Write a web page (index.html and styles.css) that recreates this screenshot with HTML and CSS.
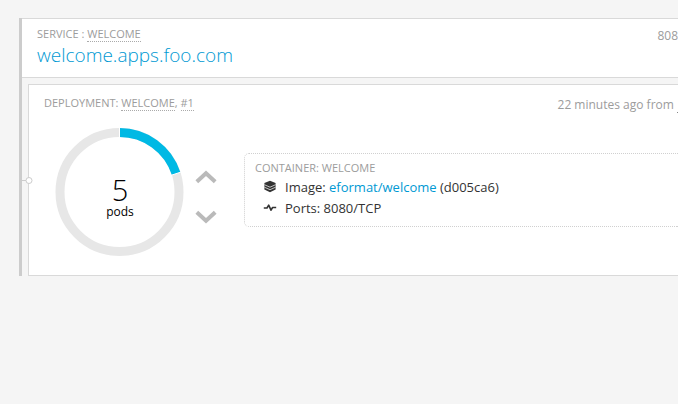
FILE: index.html
```html
<!DOCTYPE html>
<html lang="en">
<head>
<meta charset="utf-8">
<title>Project overview</title>
<link rel="stylesheet" href="styles.css">
</head>
<body>
<main class="service-group">
  <header class="service">
    <div>
      <div class="label">SERVICE : <a class="term" href="#service">WELCOME</a></div>
      <a class="route" href="#route">welcome.apps.foo.com</a>
    </div>
    <div class="meta">808</div>
  </header>
  <section class="deployment">
    <svg class="connector" width="12" height="9" viewBox="0 0 12 9" aria-hidden="true"><path d="M0 4.5h4"/><circle cx="7" cy="4.5" r="3"/></svg>
    <div class="deployment-head">
      <div class="label">DEPLOYMENT: <a class="term" href="#deployment">WELCOME</a>, <a class="term" href="#1">#1</a></div>
      <div class="meta">22 minutes ago from <span class="trigger"></span></div>
    </div>
    <div class="deployment-body">
      <div class="pods">
        <svg class="donut" width="130" height="130" viewBox="0 0 130 130" aria-hidden="true">
          <circle class="track" cx="64.5" cy="65" r="59.5"/>
          <path class="fill" d="M64.5 5.5A59.5 59.5 0 0 1 121.1 46.6"/>
          <path class="gap" d="M64.5 0V11M114.5 48.8L126.5 44.9"/>
        </svg>
        <div class="pod-text"><div class="count">5</div><div class="unit">pods</div></div>
      </div>
      <div class="scaling">
        <button type="button" aria-label="Scale up"><svg width="22" height="16" viewBox="0 0 22 16"><path d="M1.8 12.8L11 4.2L20.2 12.8"/></svg></button>
        <button type="button" aria-label="Scale down"><svg width="22" height="16" viewBox="0 0 22 16"><path d="M1.8 3.2L11 11.8L20.2 3.2"/></svg></button>
      </div>
      <div class="container">
        <div class="label">CONTAINER: WELCOME</div>
        <div class="row">
          <svg class="icon" width="14" height="14" viewBox="0 0 14 14" aria-hidden="true"><path class="solid" d="M7 0.8L12.6 3V9.4L7 12.2L1.4 9.4V3Z"/><path class="slit" d="M1.4 4.7L7 7.2L12.6 4.7M1.4 7.2L7 9.7L12.6 7.2"/></svg>
          <span>Image: <a href="#image">eformat/welcome</a> (d005ca6)</span>
        </div>
        <div class="row">
          <svg class="icon" width="14" height="14" viewBox="0 0 14 14" aria-hidden="true"><path class="pulse" d="M0.8 7H4L5.7 4.2L8 9.2L9.6 6.5H13.2"/></svg>
          <span>Ports: 8080/TCP</span>
        </div>
      </div>
    </div>
  </section>
</main>
</body>
</html>
```
FILE: styles.css
```css
* { box-sizing: border-box; }
body {
  margin: 0;
  padding: 18px 0 0 19px;
  background: #f5f5f5;
  color: #333;
  font: 13px/21px "Open Sans", sans-serif;
  overflow-x: hidden;
}
a { color: #0099d3; text-decoration: none; }
.service-group { border-left: 3px solid #ccc; }
.service {
  display: flex;
  justify-content: space-between;
  padding: 7px 0 8px 15px;
  background: #fff;
  border: solid #d9d9d9;
  border-width: 1px 0;
}
.label { color: #9c9c9c; font-size: 11px; line-height: 15px; }
.term { display: inline-block; color: inherit; line-height: 14px; border-bottom: 1px dotted #aaa; }
.route { display: block; font-size: 19px; font-weight: 300; line-height: 27px; }
.meta { padding-top: 1px; color: #9c9c9c; font-size: 12px; line-height: 17px; white-space: nowrap; }
.deployment {
  position: relative;
  margin: 6px 0 0 6px;
  padding: 10px 0 18px 15px;
  background: #fff;
  border: 1px solid #d9d9d9;
  border-right: 0;
}
.connector { position: absolute; left: -7px; top: 91px; fill: #fff; stroke: #ccc; stroke-width: 1; }
.deployment-head { display: flex; justify-content: space-between; }
.trigger { display: inline-block; width: 1px; height: 14px; border-bottom: 1px solid #888; vertical-align: -4px; }
.deployment-body { display: flex; align-items: flex-start; margin-top: 14px; }
.pods { display: grid; place-items: center; margin-left: 11px; }
.donut, .pod-text { grid-area: 1 / 1; }
.donut { display: block; fill: none; }
.track { stroke: #e7e7e7; stroke-width: 9; }
.fill { stroke: #00b9e4; stroke-width: 9; }
.gap { stroke: #fff; stroke-width: 1; }
.pod-text { color: #000; text-align: center; padding-top: 10px; }
.count { font-size: 29px; font-weight: 300; line-height: 30px; }
.unit { font-size: 12px; line-height: 14px; }
.scaling { display: flex; flex-direction: column; gap: 24px; padding-top: 42px; margin-left: 10px; }
button { display: block; padding: 0; border: 0; background: none; }
button svg { display: block; fill: none; stroke: #bababa; stroke-width: 4; }
.container {
  flex: 1;
  margin: 26px 0 0 27px;
  padding: 6px 0 7px 10px;
  border: 1px dotted #d0d0d0;
  border-right: 0;
  border-radius: 5px 0 0 5px;
}
.container .label { margin-bottom: 2px; }
.row { display: flex; gap: 8px; padding-left: 8px; }
.icon { margin-top: 3px; fill: none; }
.solid { fill: #333; }
.slit { stroke: #fff; stroke-width: 0.7; }
.pulse { stroke: #333; stroke-width: 1.6; stroke-linejoin: round; }
```
